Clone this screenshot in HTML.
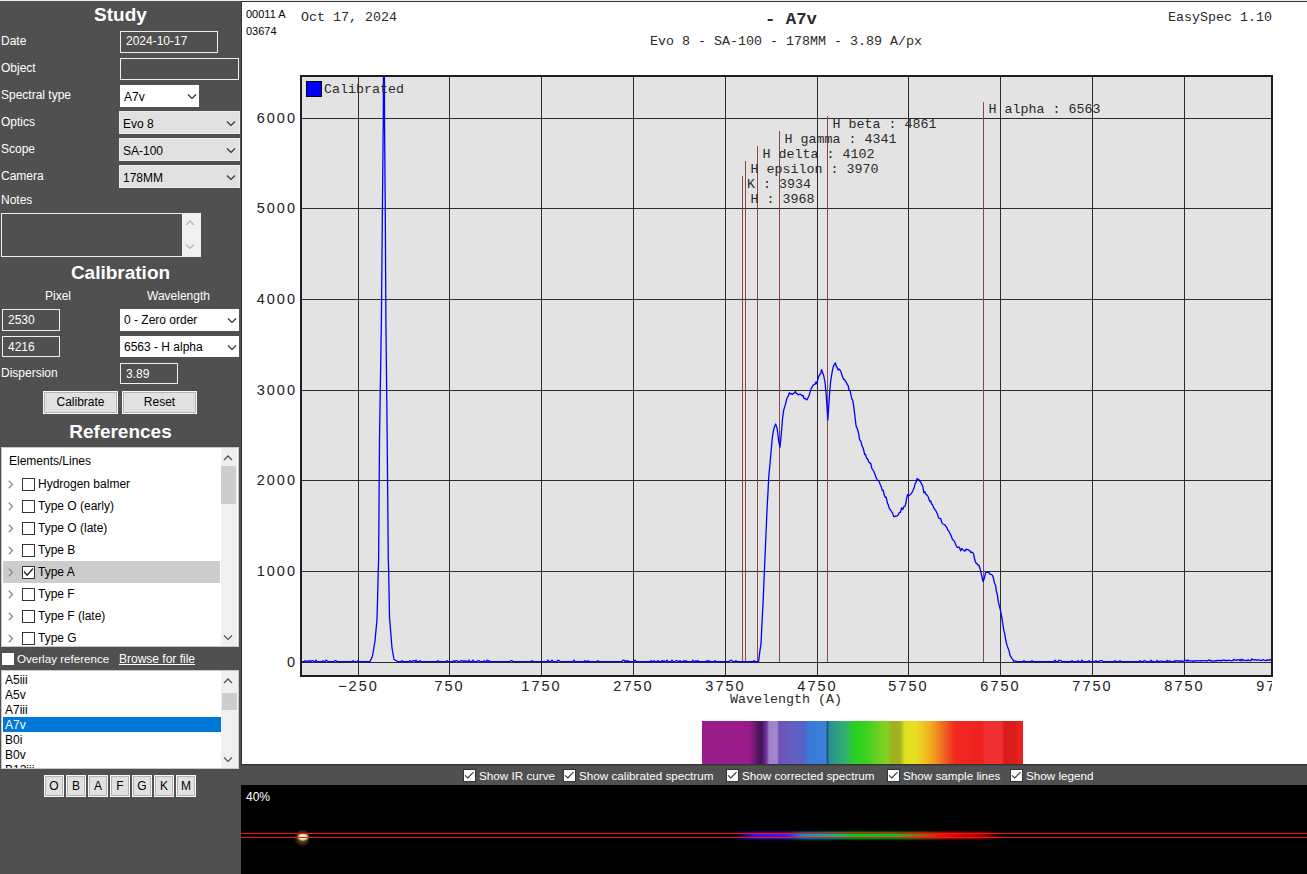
<!DOCTYPE html>
<html><head><meta charset="utf-8">
<style>
*{margin:0;padding:0;box-sizing:border-box}
html,body{width:1307px;height:874px;overflow:hidden;background:#f0f0f0;position:relative;font-family:"Liberation Sans",sans-serif}
.a{position:absolute;white-space:pre}
.lbl{color:#fff;font-size:12px;line-height:14px}
.hd{color:#fff;font-size:19px;font-weight:bold;line-height:22px;text-align:center}
.box{border:1px solid #f0f0f0}
.sel{background:#e1e1e1;border:1px solid #ececec}
.dk{color:#000;font-size:12px;line-height:14px}
.btn{background:#e1e1e1;border:1px solid #f8f8f8;box-shadow:inset 0 0 0 1px #b4b4b4;color:#000;font-size:12px;line-height:21px;text-align:center}
.mono{font-family:"Liberation Mono",monospace;color:#2a2a2a}
</style></head><body>
<div class="a" style="left:0;top:1px;width:241px;height:873px;background:#505050"></div>
<div class="a" style="left:241px;top:1px;width:1066px;height:764px;background:#fff;border-top:1px solid #333;border-left:1px solid #333;border-bottom:1px solid #333"></div>
<div class="a" style="left:241px;top:765px;width:1066px;height:20px;background:#505050;border-top:1px solid #444"></div>
<div class="a" style="left:241px;top:785px;width:1066px;height:89px;background:#000"></div>
<svg width="1307" height="874" style="position:absolute;left:0;top:0">
<defs><clipPath id="pc"><rect x="302" y="77" width="969" height="598"/></clipPath></defs>
<rect x="300" y="75" width="973" height="602" fill="#e3e3e3"/>
<rect x="358" y="77" width="1" height="598" fill="#2b2b2b"/>
<rect x="449" y="77" width="1" height="598" fill="#2b2b2b"/>
<rect x="541" y="77" width="1" height="598" fill="#2b2b2b"/>
<rect x="633" y="77" width="1" height="598" fill="#2b2b2b"/>
<rect x="725" y="77" width="1" height="598" fill="#2b2b2b"/>
<rect x="817" y="77" width="1" height="598" fill="#2b2b2b"/>
<rect x="908" y="77" width="1" height="598" fill="#2b2b2b"/>
<rect x="1000" y="77" width="1" height="598" fill="#2b2b2b"/>
<rect x="1092" y="77" width="1" height="598" fill="#2b2b2b"/>
<rect x="1184" y="77" width="1" height="598" fill="#2b2b2b"/>
<rect x="302" y="118" width="969" height="1" fill="#2b2b2b"/>
<rect x="302" y="208" width="969" height="1" fill="#2b2b2b"/>
<rect x="302" y="299" width="969" height="1" fill="#2b2b2b"/>
<rect x="302" y="390" width="969" height="1" fill="#2b2b2b"/>
<rect x="302" y="480" width="969" height="1" fill="#2b2b2b"/>
<rect x="302" y="571" width="969" height="1" fill="#2b2b2b"/>
<rect x="302" y="662" width="969" height="1" fill="#2b2b2b"/>
<rect x="301" y="76" width="971" height="600" fill="none" stroke="#1e1e1e" stroke-width="2"/>
<rect x="983" y="102" width="1" height="560" fill="#8a4848"/>
<rect x="827" y="116" width="1" height="546" fill="#8a4848"/>
<rect x="779" y="131" width="1" height="531" fill="#8a4848"/>
<rect x="757" y="146" width="1" height="516" fill="#8a4848"/>
<rect x="745" y="161" width="1" height="501" fill="#8a4848"/>
<rect x="742" y="176" width="1" height="486" fill="#8a4848"/>
<rect x="745" y="191" width="1" height="471" fill="#8a4848"/>
<polyline clip-path="url(#pc)" points="302.0,661.6 303.0,661.6 304.0,661.6 305.0,660.7 306.0,661.6 307.0,661.6 308.0,660.7 309.0,661.6 310.0,660.7 311.0,661.6 312.0,660.7 313.0,660.7 314.0,661.6 315.0,661.6 316.0,660.1 317.0,661.6 318.0,661.6 319.0,661.6 320.0,661.6 321.0,661.6 322.0,661.6 323.0,660.7 324.0,661.6 325.0,661.6 326.0,660.1 327.0,660.7 328.0,661.6 329.0,661.6 330.0,661.6 331.0,661.6 332.0,661.6 333.0,661.6 334.0,661.6 335.0,660.7 336.0,660.7 337.0,661.6 338.0,661.6 339.0,661.6 340.0,661.6 341.0,661.6 342.0,661.6 343.0,661.6 344.0,661.6 345.0,661.6 346.0,661.6 347.0,661.6 348.0,661.6 349.0,661.6 350.0,661.6 351.0,661.6 352.0,661.6 353.0,660.7 354.0,661.6 355.0,661.6 356.0,661.6 357.0,661.6 358.0,660.7 359.0,661.6 360.0,661.6 361.0,661.6 362.0,661.6 363.0,661.6 364.0,661.6 365.0,661.6 366.0,661.6 367.0,661.6 368.0,661.6 369.0,661.6 370.0,661.6 372.5,656.0 375.0,641.0 377.0,619.0 377.6,598.0 378.2,573.0 378.6,560.0 379.5,440.0 381.4,320.0 382.5,200.0 383.3,118.0 383.5,50.0 384.4,50.0 384.5,118.0 385.2,200.0 385.9,320.0 387.2,440.0 388.3,560.0 388.7,572.0 389.5,617.0 392.0,648.0 394.0,659.5 398.0,661.6 400.0,661.6 401.0,661.6 402.0,660.7 403.0,661.6 404.0,661.6 405.0,661.6 406.0,661.6 407.0,661.6 408.0,661.6 409.0,661.6 410.0,660.7 411.0,661.6 412.0,661.6 413.0,660.7 414.0,660.7 415.0,661.6 416.0,660.1 417.0,661.6 418.0,661.6 419.0,661.6 420.0,660.7 421.0,661.6 422.0,661.6 423.0,661.6 424.0,661.6 425.0,661.6 426.0,661.6 427.0,661.6 428.0,661.6 429.0,661.6 430.0,661.6 431.0,661.6 432.0,661.6 433.0,661.6 434.0,661.6 435.0,661.6 436.0,661.6 437.0,661.6 438.0,660.7 439.0,661.6 440.0,661.6 441.0,661.6 442.0,661.6 443.0,661.6 444.0,661.6 445.0,661.6 446.0,661.6 447.0,660.7 448.0,661.6 449.0,661.6 450.0,661.6 451.0,661.6 452.0,661.6 453.0,661.6 454.0,660.7 455.0,661.6 456.0,660.7 457.0,660.7 458.0,661.6 459.0,661.6 460.0,661.6 461.0,660.7 462.0,660.7 463.0,661.6 464.0,660.7 465.0,661.6 466.0,660.7 467.0,661.6 468.0,661.6 469.0,660.1 470.0,661.6 471.0,661.6 472.0,661.6 473.0,660.1 474.0,661.6 475.0,661.6 476.0,661.6 477.0,661.6 478.0,660.7 479.0,660.7 480.0,661.6 481.0,661.6 482.0,661.6 483.0,661.6 484.0,660.7 485.0,661.6 486.0,661.6 487.0,660.1 488.0,661.6 489.0,660.7 490.0,661.6 491.0,661.6 492.0,661.6 493.0,661.6 494.0,661.6 495.0,661.6 496.0,661.6 497.0,661.6 498.0,661.6 499.0,661.6 500.0,661.6 501.0,661.6 502.0,661.6 503.0,661.6 504.0,661.6 505.0,661.6 506.0,661.6 507.0,661.6 508.0,661.6 509.0,661.6 510.0,661.6 511.0,660.7 512.0,660.7 513.0,661.6 514.0,661.6 515.0,661.6 516.0,661.6 517.0,661.6 518.0,661.6 519.0,661.6 520.0,661.6 521.0,661.6 522.0,661.6 523.0,661.6 524.0,661.6 525.0,661.6 526.0,661.6 527.0,661.6 528.0,661.6 529.0,661.6 530.0,661.6 531.0,661.6 532.0,660.7 533.0,661.6 534.0,661.6 535.0,661.6 536.0,661.6 537.0,661.6 538.0,661.6 539.0,661.6 540.0,661.6 541.0,661.6 542.0,661.6 543.0,661.6 544.0,661.6 545.0,661.6 546.0,661.6 547.0,661.6 548.0,660.1 549.0,661.6 550.0,661.6 551.0,661.6 552.0,660.1 553.0,661.6 554.0,661.6 555.0,661.6 556.0,661.6 557.0,661.6 558.0,660.1 559.0,660.7 560.0,661.6 561.0,661.6 562.0,661.6 563.0,661.6 564.0,661.6 565.0,661.6 566.0,661.6 567.0,661.6 568.0,661.6 569.0,661.6 570.0,661.6 571.0,661.6 572.0,661.6 573.0,661.6 574.0,660.1 575.0,661.6 576.0,661.6 577.0,661.6 578.0,661.6 579.0,661.6 580.0,661.6 581.0,661.6 582.0,661.6 583.0,661.6 584.0,661.6 585.0,660.7 586.0,661.6 587.0,661.6 588.0,660.7 589.0,661.6 590.0,661.6 591.0,661.6 592.0,661.6 593.0,661.6 594.0,661.6 595.0,661.6 596.0,661.6 597.0,661.6 598.0,660.7 599.0,661.6 600.0,661.6 601.0,661.6 602.0,661.6 603.0,661.6 604.0,661.6 605.0,661.6 606.0,661.6 607.0,661.6 608.0,661.6 609.0,661.6 610.0,661.6 611.0,661.6 612.0,661.6 613.0,661.6 614.0,661.6 615.0,661.6 616.0,661.6 617.0,661.6 618.0,661.6 619.0,661.6 620.0,661.6 621.0,661.6 622.0,661.6 623.0,660.1 624.0,660.1 625.0,661.6 626.0,660.7 627.0,661.6 628.0,660.7 629.0,661.6 630.0,661.6 631.0,661.6 632.0,661.6 633.0,661.6 634.0,661.6 635.0,660.1 636.0,661.6 637.0,661.6 638.0,661.6 639.0,661.6 640.0,661.6 641.0,661.6 642.0,661.6 643.0,661.6 644.0,661.6 645.0,661.6 646.0,661.6 647.0,661.6 648.0,661.6 649.0,661.6 650.0,661.6 651.0,660.7 652.0,661.6 653.0,661.6 654.0,660.7 655.0,661.6 656.0,661.6 657.0,661.6 658.0,660.7 659.0,661.6 660.0,661.6 661.0,661.6 662.0,660.7 663.0,661.6 664.0,660.7 665.0,661.6 666.0,661.6 667.0,660.1 668.0,661.6 669.0,661.6 670.0,661.6 671.0,661.6 672.0,660.1 673.0,661.6 674.0,661.6 675.0,661.6 676.0,660.7 677.0,660.7 678.0,661.6 679.0,661.6 680.0,660.7 681.0,661.6 682.0,661.6 683.0,661.6 684.0,660.7 685.0,661.6 686.0,660.7 687.0,661.6 688.0,661.6 689.0,661.6 690.0,661.6 691.0,661.6 692.0,661.6 693.0,660.1 694.0,661.6 695.0,661.6 696.0,660.7 697.0,661.6 698.0,660.7 699.0,661.6 700.0,661.6 701.0,661.6 702.0,661.6 703.0,661.6 704.0,661.6 705.0,661.6 706.0,661.6 707.0,660.7 708.0,661.6 709.0,660.7 710.0,661.6 711.0,661.6 712.0,661.6 713.0,661.6 714.0,661.6 715.0,660.7 716.0,661.6 717.0,661.6 718.0,661.6 719.0,661.6 720.0,661.6 721.0,661.6 722.0,661.6 723.0,661.6 724.0,661.6 725.0,661.6 726.0,661.6 727.0,661.6 728.0,661.6 729.0,661.6 730.0,660.7 731.0,660.1 732.0,660.7 733.0,661.6 734.0,661.6 735.0,661.6 736.0,660.7 737.0,661.6 738.0,661.6 739.0,661.6 740.0,661.6 741.0,661.6 742.0,661.6 743.0,661.6 744.0,661.6 745.0,661.6 746.0,661.6 747.0,661.6 748.0,661.6 749.0,661.6 750.0,661.6 751.0,661.6 752.0,661.6 753.0,661.6 754.0,660.7 755.0,661.6 756.0,661.6 757.0,661.6 758.6,661.4 759.8,651.7 761.0,644.0 762.1,620.9 763.2,600.2 764.3,573.4 765.4,548.2 766.3,526.8 767.2,506.5 768.0,491.9 768.8,476.1 769.8,466.0 770.8,454.5 772.2,438.7 773.5,430.2 774.5,426.9 775.6,424.0 777.0,427.9 777.8,433.2 778.6,440.9 780.0,447.1 781.1,435.9 782.5,419.2 783.5,411.0 784.5,407.4 785.4,404.4 786.4,400.3 787.3,397.4 788.3,396.3 789.3,392.8 790.2,393.8 791.2,393.5 792.1,394.4 793.2,393.6 794.4,392.9 795.5,391.5 796.4,393.5 797.2,393.8 798.1,394.9 799.0,394.4 800.0,394.1 801.0,394.8 802.1,395.9 803.1,395.4 804.0,398.5 805.0,398.3 806.0,399.2 806.9,399.9 807.9,398.2 809.0,395.8 810.0,392.4 811.3,388.1 812.2,387.0 813.1,385.2 814.0,384.4 814.9,384.4 815.9,382.0 816.8,383.8 817.8,379.5 818.9,376.1 819.8,374.4 820.7,373.6 821.6,369.7 822.7,373.1 823.7,375.5 825.1,383.0 826.4,397.6 827.8,419.9 829.2,398.6 830.5,382.5 831.5,375.8 832.6,369.7 833.5,366.0 834.5,364.4 835.4,362.9 836.3,366.5 837.2,367.2 838.1,370.1 839.0,369.0 840.0,369.9 840.9,371.3 841.8,374.8 842.7,377.1 843.6,379.4 844.5,379.3 845.4,381.2 846.3,382.2 847.2,384.5 848.2,385.6 849.1,390.4 850.1,390.5 851.0,395.2 851.9,399.1 852.7,400.2 853.6,405.6 854.9,416.2 856.1,426.1 857.0,427.9 857.9,430.7 858.7,433.9 859.6,439.7 860.7,440.8 861.9,445.4 863.0,447.5 863.9,451.0 864.7,454.6 865.6,454.3 866.6,458.2 867.6,458.9 868.7,461.8 869.7,463.0 870.7,463.1 871.8,468.3 872.9,470.0 873.9,471.5 875.0,474.4 876.1,477.7 877.1,479.3 878.2,480.6 879.3,481.9 880.3,484.7 881.3,486.8 882.3,490.7 883.2,490.2 884.2,494.8 885.2,497.3 886.2,497.2 887.3,502.8 888.4,505.1 889.4,508.7 890.5,509.7 891.5,511.5 892.6,513.1 893.7,516.5 894.7,516.7 895.6,516.0 896.5,516.2 897.3,515.7 898.2,515.0 899.3,512.5 900.5,512.3 901.6,507.9 902.7,509.5 903.9,506.7 905.0,506.3 905.9,503.0 906.7,498.0 907.6,494.6 908.7,495.8 909.8,494.9 910.8,494.0 911.9,492.7 913.0,490.5 914.2,487.5 915.3,483.2 916.2,482.2 917.0,478.6 917.9,479.3 918.8,479.3 919.6,481.1 920.5,481.7 921.6,483.9 922.8,486.6 923.9,492.9 924.9,491.7 925.9,494.2 927.0,495.1 928.0,496.4 929.0,499.2 929.9,501.6 930.8,501.0 931.6,504.0 932.5,504.6 933.5,507.4 934.5,509.0 935.6,510.3 936.6,512.4 937.6,514.6 938.6,518.2 939.7,518.3 940.7,518.7 941.8,522.3 942.8,524.0 944.2,524.5 945.1,525.1 946.0,526.7 947.0,527.9 947.9,530.3 948.8,531.0 949.7,533.0 950.6,534.4 951.5,536.8 952.4,539.2 953.3,540.1 954.2,541.1 955.1,543.1 956.1,545.5 957.0,547.1 957.9,547.5 958.8,547.0 959.7,548.2 960.6,550.9 961.7,548.4 962.7,549.7 963.8,550.3 964.9,551.2 965.9,549.2 967.0,549.6 967.9,549.6 968.8,550.3 969.8,550.6 970.7,552.4 971.6,552.2 972.5,552.4 973.5,553.8 974.4,558.0 975.3,561.5 976.2,563.5 977.1,563.5 978.0,565.3 978.9,565.2 979.9,568.3 980.8,571.8 981.9,576.5 983.0,581.6 984.2,578.8 985.4,573.3 986.3,572.3 987.2,571.9 988.1,572.5 989.0,572.5 989.9,574.1 990.9,574.2 991.8,574.7 992.7,575.8 993.6,578.8 994.5,583.0 995.5,585.2 996.4,591.5 997.3,594.3 998.2,601.1 999.1,604.8 1000.0,608.3 1000.9,612.6 1001.9,617.9 1002.8,624.0 1003.7,629.7 1004.6,633.3 1005.5,638.6 1006.4,643.1 1007.4,646.4 1008.3,648.8 1009.2,651.4 1010.1,655.7 1011.0,656.8 1011.9,658.3 1012.8,659.4 1013.8,661.5 1014.7,661.0 1015.6,661.1 1017.0,661.6 1018.0,661.6 1019.0,661.6 1020.0,661.6 1021.0,661.6 1022.0,661.6 1023.0,661.6 1024.0,660.7 1025.0,661.6 1026.0,661.6 1027.0,661.6 1028.0,661.6 1029.0,661.6 1030.0,661.6 1031.0,661.6 1032.0,660.7 1033.0,661.6 1034.0,661.6 1035.0,661.6 1036.0,661.6 1037.0,661.6 1038.0,661.6 1039.0,661.6 1040.0,661.6 1041.0,661.6 1042.0,661.6 1043.0,661.6 1044.0,661.6 1045.0,661.6 1046.0,661.6 1047.0,661.6 1048.0,661.6 1049.0,661.6 1050.0,661.6 1051.0,661.6 1052.0,661.6 1053.0,661.6 1054.0,661.6 1055.0,660.1 1056.0,661.6 1057.0,661.6 1058.0,661.6 1059.0,660.1 1060.0,660.7 1061.0,660.7 1062.0,661.6 1063.0,661.6 1064.0,661.6 1065.0,661.6 1066.0,661.6 1067.0,661.6 1068.0,661.6 1069.0,661.6 1070.0,661.6 1071.0,661.6 1072.0,660.7 1073.0,661.6 1074.0,661.6 1075.0,661.6 1076.0,661.6 1077.0,661.6 1078.0,660.7 1079.0,661.6 1080.0,661.6 1081.0,661.6 1082.0,660.1 1083.0,661.6 1084.0,661.6 1085.0,661.6 1086.0,661.6 1087.0,661.6 1088.0,661.6 1089.0,660.7 1090.0,661.6 1091.0,661.6 1092.0,661.6 1093.0,661.6 1094.0,661.6 1095.0,661.6 1096.0,660.7 1097.0,661.6 1098.0,661.6 1099.0,661.6 1100.0,660.7 1101.0,660.7 1102.0,660.7 1103.0,661.6 1104.0,661.6 1105.0,661.6 1106.0,661.6 1107.0,661.6 1108.0,661.6 1109.0,661.6 1110.0,661.6 1111.0,661.6 1112.0,661.6 1113.0,661.6 1114.0,661.6 1115.0,660.7 1116.0,661.6 1117.0,661.6 1118.0,661.6 1119.0,661.6 1120.0,660.7 1121.0,661.6 1122.0,661.6 1123.0,661.6 1124.0,661.6 1125.0,661.6 1126.0,661.6 1127.0,661.6 1128.0,661.6 1129.0,661.6 1130.0,661.6 1131.0,661.6 1132.0,661.6 1133.0,661.6 1134.0,661.6 1135.0,661.6 1136.0,661.6 1137.0,661.6 1138.0,661.6 1139.0,661.6 1140.0,660.7 1141.0,661.6 1142.0,661.6 1143.0,661.6 1144.0,660.7 1145.0,660.7 1146.0,661.6 1147.0,661.6 1148.0,661.6 1149.0,661.6 1150.0,661.4 1151.0,660.3 1152.0,661.8 1153.0,661.3 1154.0,661.7 1155.0,661.8 1156.0,661.7 1157.0,660.3 1158.0,661.6 1159.0,661.7 1160.0,661.2 1161.0,661.1 1162.0,661.5 1163.0,661.3 1164.0,661.4 1165.0,661.7 1166.0,661.9 1167.0,660.4 1168.0,661.7 1169.0,660.9 1170.0,661.0 1171.0,661.8 1172.0,661.7 1173.0,661.7 1174.0,661.0 1175.0,661.7 1176.0,660.5 1177.0,661.0 1178.0,660.9 1179.0,661.0 1180.0,661.4 1181.0,660.7 1182.0,661.4 1183.0,661.0 1184.0,661.4 1185.0,660.7 1186.0,660.1 1187.0,661.2 1188.0,659.9 1189.0,661.0 1190.0,660.9 1191.0,660.9 1192.0,660.9 1193.0,661.4 1194.0,660.9 1195.0,661.2 1196.0,660.5 1197.0,660.9 1198.0,660.9 1199.0,660.9 1200.0,660.5 1201.0,661.1 1202.0,660.5 1203.0,660.8 1204.0,660.5 1205.0,660.9 1206.0,660.5 1207.0,661.2 1208.0,660.5 1209.0,659.8 1210.0,660.8 1211.0,660.3 1212.0,661.2 1213.0,661.1 1214.0,661.0 1215.0,660.6 1216.0,661.1 1217.0,660.4 1218.0,660.7 1219.0,660.3 1220.0,660.9 1221.0,660.2 1222.0,660.9 1223.0,660.1 1224.0,659.8 1225.0,660.7 1226.0,660.5 1227.0,660.5 1228.0,660.5 1229.0,660.1 1230.0,660.5 1231.0,660.8 1232.0,660.5 1233.0,660.5 1234.0,659.2 1235.0,660.1 1236.0,660.5 1237.0,659.7 1238.0,659.8 1239.0,660.4 1240.0,659.5 1241.0,660.8 1242.0,659.2 1243.0,660.6 1244.0,660.1 1245.0,660.3 1246.0,660.7 1247.0,660.6 1248.0,659.9 1249.0,660.5 1250.0,660.7 1251.0,660.6 1252.0,658.8 1253.0,659.9 1254.0,660.2 1255.0,659.7 1256.0,659.9 1257.0,660.4 1258.0,659.8 1259.0,659.8 1260.0,660.3 1261.0,660.5 1262.0,660.2 1263.0,659.7 1264.0,660.2 1265.0,660.4 1266.0,660.6 1267.0,659.9 1268.0,660.0 1269.0,660.3 1270.0,659.4 1271.0,660.5" fill="none" stroke="#0000ff" stroke-width="1.3" stroke-linejoin="round"/>
<text x="988.5" y="113.2" font-family="Liberation Mono" font-size="13.33" fill="#2a2a2a">H&#160;alpha&#160;:&#160;6563</text>
<text x="832.5" y="127.9" font-family="Liberation Mono" font-size="13.33" fill="#2a2a2a">H&#160;beta&#160;:&#160;4861</text>
<text x="784.5" y="142.7" font-family="Liberation Mono" font-size="13.33" fill="#2a2a2a">H&#160;gamma&#160;:&#160;4341</text>
<text x="762.5" y="157.8" font-family="Liberation Mono" font-size="13.33" fill="#2a2a2a">H&#160;delta&#160;:&#160;4102</text>
<text x="750.5" y="172.7" font-family="Liberation Mono" font-size="13.33" fill="#2a2a2a">H&#160;epsilon&#160;:&#160;3970</text>
<text x="747.0" y="187.6" font-family="Liberation Mono" font-size="13.33" fill="#2a2a2a">K&#160;:&#160;3934</text>
<text x="750.5" y="202.5" font-family="Liberation Mono" font-size="13.33" fill="#2a2a2a">H&#160;:&#160;3968</text>
<rect x="306.5" y="81.5" width="15" height="15" fill="#0000ff" stroke="#000" stroke-width="1"/>
<text x="324" y="93" font-family="Liberation Mono" font-size="13.33" fill="#2a2a2a">Calibrated</text>
<text x="358.5" y="691" text-anchor="middle" font-family="Liberation Sans" font-size="14.5" letter-spacing="2" fill="#222">−250</text>
<text x="449.5" y="691" text-anchor="middle" font-family="Liberation Sans" font-size="14.5" letter-spacing="2" fill="#222">750</text>
<text x="541.5" y="691" text-anchor="middle" font-family="Liberation Sans" font-size="14.5" letter-spacing="2" fill="#222">1750</text>
<text x="633.5" y="691" text-anchor="middle" font-family="Liberation Sans" font-size="14.5" letter-spacing="2" fill="#222">2750</text>
<text x="725.5" y="691" text-anchor="middle" font-family="Liberation Sans" font-size="14.5" letter-spacing="2" fill="#222">3750</text>
<text x="817.5" y="691" text-anchor="middle" font-family="Liberation Sans" font-size="14.5" letter-spacing="2" fill="#222">4750</text>
<text x="908.5" y="691" text-anchor="middle" font-family="Liberation Sans" font-size="14.5" letter-spacing="2" fill="#222">5750</text>
<text x="1000.5" y="691" text-anchor="middle" font-family="Liberation Sans" font-size="14.5" letter-spacing="2" fill="#222">6750</text>
<text x="1092.5" y="691" text-anchor="middle" font-family="Liberation Sans" font-size="14.5" letter-spacing="2" fill="#222">7750</text>
<text x="1184.5" y="691" text-anchor="middle" font-family="Liberation Sans" font-size="14.5" letter-spacing="2" fill="#222">8750</text>
<text x="297" y="123" text-anchor="end" font-family="Liberation Sans" font-size="14.5" letter-spacing="2" fill="#222">6000</text>
<text x="297" y="213" text-anchor="end" font-family="Liberation Sans" font-size="14.5" letter-spacing="2" fill="#222">5000</text>
<text x="297" y="304" text-anchor="end" font-family="Liberation Sans" font-size="14.5" letter-spacing="2" fill="#222">4000</text>
<text x="297" y="395" text-anchor="end" font-family="Liberation Sans" font-size="14.5" letter-spacing="2" fill="#222">3000</text>
<text x="297" y="485" text-anchor="end" font-family="Liberation Sans" font-size="14.5" letter-spacing="2" fill="#222">2000</text>
<text x="297" y="576" text-anchor="end" font-family="Liberation Sans" font-size="14.5" letter-spacing="2" fill="#222">1000</text>
<text x="297" y="667" text-anchor="end" font-family="Liberation Sans" font-size="14.5" letter-spacing="2" fill="#222">0</text>
<defs><clipPath id="xc"><rect x="0" y="676" width="1272" height="30"/></clipPath></defs>
<text clip-path="url(#xc)" x="1276.5" y="691" text-anchor="middle" font-family="Liberation Sans" font-size="14.5" letter-spacing="2" fill="#222">9750</text>
</svg>

<div class="a" style="left:246px;top:7.5px;font-size:11px;line-height:13px;color:#000">00011 A</div>
<div class="a" style="left:246px;top:25px;font-size:11px;line-height:13px;color:#000">03674</div>
<div class="a mono" style="left:301px;top:9.5px;font-size:13.33px;line-height:15px">Oct 17, 2024</div>
<div class="a mono" style="left:765px;top:10px;font-size:17.33px;line-height:19px;font-weight:bold">- A7v</div>
<div class="a mono" style="left:650px;top:34px;font-size:13.33px;line-height:15px">Evo 8 - SA-100 - 178MM - 3.89 A/px</div>
<div class="a mono" style="left:1168px;top:9.5px;font-size:13.33px;line-height:15px">EasySpec 1.10</div>
<div class="a mono" style="left:730px;top:692px;font-size:13.33px;line-height:15px">Wavelength (A)</div>
<div class="a" style="left:702px;top:721px;width:321px;height:43px;background:linear-gradient(to right,#9a1c8a 0.0%,#9a1c8a 14.64%,#6a1a70 16.51%,#3e1450 18.38%,#5a2080 19.31%,#7a3aa8 20.25%,#a080c8 20.87%,#a08ac8 23.36%,#7050b8 23.99%,#6060c0 28.35%,#5464c8 32.09%,#3a78d8 32.71%,#3c80d8 38.47%,#1a5a80 39.1%,#2a9090 39.72%,#30b070 44.55%,#2ad020 47.66%,#38d020 50.78%,#60d020 53.89%,#88d020 57.94%,#a0b020 59.19%,#a0b420 61.68%,#e0e020 63.24%,#e8e020 66.36%,#f0c020 69.47%,#f0a020 71.96%,#f06020 75.7%,#f02820 78.82%,#f02020 87.23%,#f03030 88.16%,#f03030 93.46%,#d81c1c 94.08%,#d81c1c 97.82%,#f02020 98.44%,#f02020 100.0%)"></div><div class="a" style="left:463px;top:769px;width:13px;height:13px;background:#fff;border:1px solid #333"></div><svg class="a" style="left:463px;top:769px" width="13" height="13"><polyline points="2,6.3 4.8,9 10.5,3.2" fill="none" stroke="#333" stroke-width="1.1"/></svg><span class="a lbl" style="left:479px;top:769px;font-size:11.7px">Show IR curve</span><div class="a" style="left:563px;top:769px;width:13px;height:13px;background:#fff;border:1px solid #333"></div><svg class="a" style="left:563px;top:769px" width="13" height="13"><polyline points="2,6.3 4.8,9 10.5,3.2" fill="none" stroke="#333" stroke-width="1.1"/></svg><span class="a lbl" style="left:579px;top:769px;font-size:11.7px">Show calibrated spectrum</span><div class="a" style="left:726px;top:769px;width:13px;height:13px;background:#fff;border:1px solid #333"></div><svg class="a" style="left:726px;top:769px" width="13" height="13"><polyline points="2,6.3 4.8,9 10.5,3.2" fill="none" stroke="#333" stroke-width="1.1"/></svg><span class="a lbl" style="left:742px;top:769px;font-size:11.7px">Show corrected spectrum</span><div class="a" style="left:887px;top:769px;width:13px;height:13px;background:#fff;border:1px solid #333"></div><svg class="a" style="left:887px;top:769px" width="13" height="13"><polyline points="2,6.3 4.8,9 10.5,3.2" fill="none" stroke="#333" stroke-width="1.1"/></svg><span class="a lbl" style="left:903px;top:769px;font-size:11.7px">Show sample lines</span><div class="a" style="left:1010px;top:769px;width:13px;height:13px;background:#fff;border:1px solid #333"></div><svg class="a" style="left:1010px;top:769px" width="13" height="13"><polyline points="2,6.3 4.8,9 10.5,3.2" fill="none" stroke="#333" stroke-width="1.1"/></svg><span class="a lbl" style="left:1026px;top:769px;font-size:11.7px">Show legend</span>
<div class="a" style="left:246px;top:790px;font-size:12px;line-height:14px;color:#fff">40%</div>
<div class="a" style="left:733px;top:831.5px;width:270px;height:7px;filter:blur(1.1px);background:linear-gradient(to right,rgba(60,0,220,0) 0%,#4010e0 8%,#3a20e0 20%,#1090c8 26%,#10b0a0 36%,#00d020 45%,#10c020 60%,#a06010 70%,#e01010 78%,#a00808 92%,rgba(120,0,0,0) 100%)"></div>
<div class="a" style="left:294px;top:830px;width:17px;height:17px;border-radius:50%;background:radial-gradient(ellipse at 50% 45%,rgba(200,160,90,0.75) 0%,rgba(150,110,50,0.45) 40%,rgba(0,0,0,0) 72%)"></div>
<div class="a" style="left:296.5px;top:832.5px;width:12px;height:8px;border-radius:50%;background:radial-gradient(ellipse,#fffff0 0%,#fff0c8 35%,rgba(230,210,150,0.6) 60%,rgba(0,0,0,0) 80%)"></div>
<div class="a" style="left:241px;top:833px;width:1066px;height:1px;background:#ff1010"></div>
<div class="a" style="left:241px;top:837px;width:1066px;height:1px;background:#ff1010"></div>


<div class="a hd" style="left:0;top:4px;width:241px">Study</div>
<div class="a lbl" style="left:1px;top:34px">Date</div>
<div class="a box" style="left:120px;top:31px;width:98px;height:22px"><span class="a lbl" style="left:5px;top:2px">2024-10-17</span></div>
<div class="a lbl" style="left:1px;top:61px">Object</div>
<div class="a box" style="left:120px;top:58px;width:119px;height:22px"></div>
<div class="a lbl" style="left:1px;top:88px">Spectral type</div>
<div class="a sel" style="left:120px;top:85px;width:79px;height:22px;background:#fff;border-color:#fff"><span class="a dk" style="left:3px;top:4px">A7v</span><svg class="a" style="left:66px;top:8px" width="10" height="6"><polyline points="1,0.5 5,4.5 9,0.5" fill="none" stroke="#333" stroke-width="1.2"/></svg></div>
<div class="a lbl" style="left:1px;top:115px">Optics</div>
<div class="a sel" style="left:119px;top:111px;width:121px;height:23px"><span class="a dk" style="left:3px;top:5px">Evo 8</span><svg class="a" style="left:106px;top:9px" width="10" height="6"><polyline points="1,0.5 5,4.5 9,0.5" fill="none" stroke="#333" stroke-width="1.2"/></svg></div>
<div class="a lbl" style="left:1px;top:142px">Scope</div>
<div class="a sel" style="left:119px;top:138px;width:121px;height:23px"><span class="a dk" style="left:3px;top:5px">SA-100</span><svg class="a" style="left:106px;top:9px" width="10" height="6"><polyline points="1,0.5 5,4.5 9,0.5" fill="none" stroke="#333" stroke-width="1.2"/></svg></div>
<div class="a lbl" style="left:1px;top:169px">Camera</div>
<div class="a sel" style="left:119px;top:165px;width:121px;height:23px"><span class="a dk" style="left:3px;top:5px">178MM</span><svg class="a" style="left:106px;top:9px" width="10" height="6"><polyline points="1,0.5 5,4.5 9,0.5" fill="none" stroke="#333" stroke-width="1.2"/></svg></div>
<div class="a lbl" style="left:1px;top:193px">Notes</div>
<div class="a box" style="left:1px;top:213px;width:200px;height:44px"><div class="a" style="right:0;top:0;width:18px;height:42px;background:#f0f0f0"></div><svg class="a" style="left:183px;top:6px" width="10" height="6"><polyline points="1,5 5,1 9,5" fill="none" stroke="#b4b4b4" stroke-width="1.4"/></svg><svg class="a" style="left:183px;top:30px" width="10" height="6"><polyline points="1,0.5 5,4.5 9,0.5" fill="none" stroke="#b4b4b4" stroke-width="1.2"/></svg></div>
<div class="a hd" style="left:0;top:262px;width:241px">Calibration</div>
<div class="a lbl" style="left:45px;top:289px">Pixel</div>
<div class="a lbl" style="left:147px;top:289px">Wavelength</div>
<div class="a box" style="left:2px;top:309px;width:58px;height:22px"><span class="a lbl" style="left:5px;top:3px">2530</span></div>
<div class="a sel" style="left:120px;top:309px;width:119px;height:22px;background:#fff;border-color:#fff"><span class="a dk" style="left:3px;top:3px">0 - Zero order</span><svg class="a" style="left:106px;top:8px" width="10" height="6"><polyline points="1,0.5 5,4.5 9,0.5" fill="none" stroke="#333" stroke-width="1.2"/></svg></div>
<div class="a box" style="left:2px;top:336px;width:58px;height:21px"><span class="a lbl" style="left:5px;top:3px">4216</span></div>
<div class="a sel" style="left:120px;top:336px;width:119px;height:21px;background:#fff;border-color:#fff"><span class="a dk" style="left:3px;top:3px">6563 - H alpha</span><svg class="a" style="left:106px;top:8px" width="10" height="6"><polyline points="1,0.5 5,4.5 9,0.5" fill="none" stroke="#333" stroke-width="1.2"/></svg></div>
<div class="a lbl" style="left:1px;top:366px">Dispersion</div>
<div class="a box" style="left:120px;top:363px;width:58px;height:21px"><span class="a lbl" style="left:5px;top:3px">3.89</span></div>
<div class="a btn" style="left:43px;top:391px;width:75px;height:23px">Calibrate</div>
<div class="a btn" style="left:122px;top:391px;width:75px;height:23px">Reset</div>
<div class="a hd" style="left:0;top:421px;width:241px">References</div>
<div class="a" style="left:1px;top:447px;width:238px;height:200px;background:#fff;border:1px solid #c8c8c8"></div>
<div class="a dk" style="left:9px;top:454px">Elements/Lines</div>
<div class="a" style="left:221px;top:448px;width:16px;height:198px;background:#f0f0f0"></div>
<div class="a" style="left:221px;top:466px;width:15px;height:38px;background:#cdcdcd"></div>
<svg class="a" style="left:223px;top:455px" width="10" height="6"><polyline points="1,5 5,1 9,5" fill="none" stroke="#555" stroke-width="1.4"/></svg><svg class="a" style="left:223px;top:634.5px" width="10" height="6"><polyline points="1,0.5 5,4.5 9,0.5" fill="none" stroke="#555" stroke-width="1.2"/></svg>
<svg class="a" style="left:8px;top:479.5px" width="6" height="9"><polyline points="0.8,0.8 4.5,4.5 0.8,8.2" fill="none" stroke="#8a8a8a" stroke-width="1.3"/></svg><div class="a" style="left:22px;top:478px;width:13px;height:13px;border:1px solid #333;background:#fff"></div><span class="a dk" style="left:38px;top:477px">Hydrogen balmer</span><svg class="a" style="left:8px;top:501.5px" width="6" height="9"><polyline points="0.8,0.8 4.5,4.5 0.8,8.2" fill="none" stroke="#8a8a8a" stroke-width="1.3"/></svg><div class="a" style="left:22px;top:500px;width:13px;height:13px;border:1px solid #333;background:#fff"></div><span class="a dk" style="left:38px;top:499px">Type O (early)</span><svg class="a" style="left:8px;top:523.5px" width="6" height="9"><polyline points="0.8,0.8 4.5,4.5 0.8,8.2" fill="none" stroke="#8a8a8a" stroke-width="1.3"/></svg><div class="a" style="left:22px;top:522px;width:13px;height:13px;border:1px solid #333;background:#fff"></div><span class="a dk" style="left:38px;top:521px">Type O (late)</span><svg class="a" style="left:8px;top:545.5px" width="6" height="9"><polyline points="0.8,0.8 4.5,4.5 0.8,8.2" fill="none" stroke="#8a8a8a" stroke-width="1.3"/></svg><div class="a" style="left:22px;top:544px;width:13px;height:13px;border:1px solid #333;background:#fff"></div><span class="a dk" style="left:38px;top:543px">Type B</span><div class="a" style="left:3px;top:561px;width:217px;height:22px;background:#cccccc"></div><svg class="a" style="left:8px;top:567.5px" width="6" height="9"><polyline points="0.8,0.8 4.5,4.5 0.8,8.2" fill="none" stroke="#8a8a8a" stroke-width="1.3"/></svg><div class="a" style="left:22px;top:566px;width:13px;height:13px;border:1px solid #333;background:#fff"></div><svg class="a" style="left:22px;top:566px" width="13" height="13"><polyline points="2,5.5 5.2,9.2 11,2.5" fill="none" stroke="#222" stroke-width="1.3"/></svg><span class="a dk" style="left:38px;top:565px">Type A</span><svg class="a" style="left:8px;top:589.5px" width="6" height="9"><polyline points="0.8,0.8 4.5,4.5 0.8,8.2" fill="none" stroke="#8a8a8a" stroke-width="1.3"/></svg><div class="a" style="left:22px;top:588px;width:13px;height:13px;border:1px solid #333;background:#fff"></div><span class="a dk" style="left:38px;top:587px">Type F</span><svg class="a" style="left:8px;top:611.5px" width="6" height="9"><polyline points="0.8,0.8 4.5,4.5 0.8,8.2" fill="none" stroke="#8a8a8a" stroke-width="1.3"/></svg><div class="a" style="left:22px;top:610px;width:13px;height:13px;border:1px solid #333;background:#fff"></div><span class="a dk" style="left:38px;top:609px">Type F (late)</span><svg class="a" style="left:8px;top:633.5px" width="6" height="9"><polyline points="0.8,0.8 4.5,4.5 0.8,8.2" fill="none" stroke="#8a8a8a" stroke-width="1.3"/></svg><div class="a" style="left:22px;top:632px;width:13px;height:13px;border:1px solid #333;background:#fff"></div><span class="a dk" style="left:38px;top:631px">Type G</span>
<div class="a" style="left:2px;top:653px;width:12px;height:12px;background:#fff"></div>
<div class="a lbl" style="left:17px;top:652px;font-size:11.6px">Overlay reference</div>
<div class="a lbl" style="left:119px;top:652px;text-decoration:underline">Browse for file</div>
<div class="a" style="left:1px;top:670px;width:238px;height:99px;background:#fff;border:1px solid #c8c8c8;overflow:hidden">
  <div class="a" style="left:1px;top:46px;width:218px;height:15px;background:#0078d7"></div>
  <span class="a dk" style="left:3px;top:2px">A5iii</span>
  <span class="a dk" style="left:3px;top:17px">A5v</span>
  <span class="a dk" style="left:3px;top:32px">A7iii</span>
  <span class="a" style="left:3px;top:47px;color:#fff;font-size:12px;line-height:14px">A7v</span>
  <span class="a dk" style="left:3px;top:62px">B0i</span>
  <span class="a dk" style="left:3px;top:77px">B0v</span>
  <span class="a dk" style="left:3px;top:92px">B12iii</span>
  <div class="a" style="left:219px;top:0;width:17px;height:98px;background:#f0f0f0"></div>
  <div class="a" style="left:220px;top:22px;width:15px;height:17px;background:#cdcdcd"></div>
</div>
<svg class="a" style="left:223px;top:678px" width="10" height="6"><polyline points="1,5 5,1 9,5" fill="none" stroke="#555" stroke-width="1.4"/></svg><svg class="a" style="left:223px;top:757px" width="10" height="6"><polyline points="1,0.5 5,4.5 9,0.5" fill="none" stroke="#555" stroke-width="1.2"/></svg>
<div class="a btn" style="left:44px;top:775px;width:20px;height:22px">O</div><div class="a btn" style="left:66px;top:775px;width:20px;height:22px">B</div><div class="a btn" style="left:88px;top:775px;width:20px;height:22px">A</div><div class="a btn" style="left:110px;top:775px;width:20px;height:22px">F</div><div class="a btn" style="left:132px;top:775px;width:20px;height:22px">G</div><div class="a btn" style="left:154px;top:775px;width:20px;height:22px">K</div><div class="a btn" style="left:176px;top:775px;width:20px;height:22px">M</div>

</body></html>
